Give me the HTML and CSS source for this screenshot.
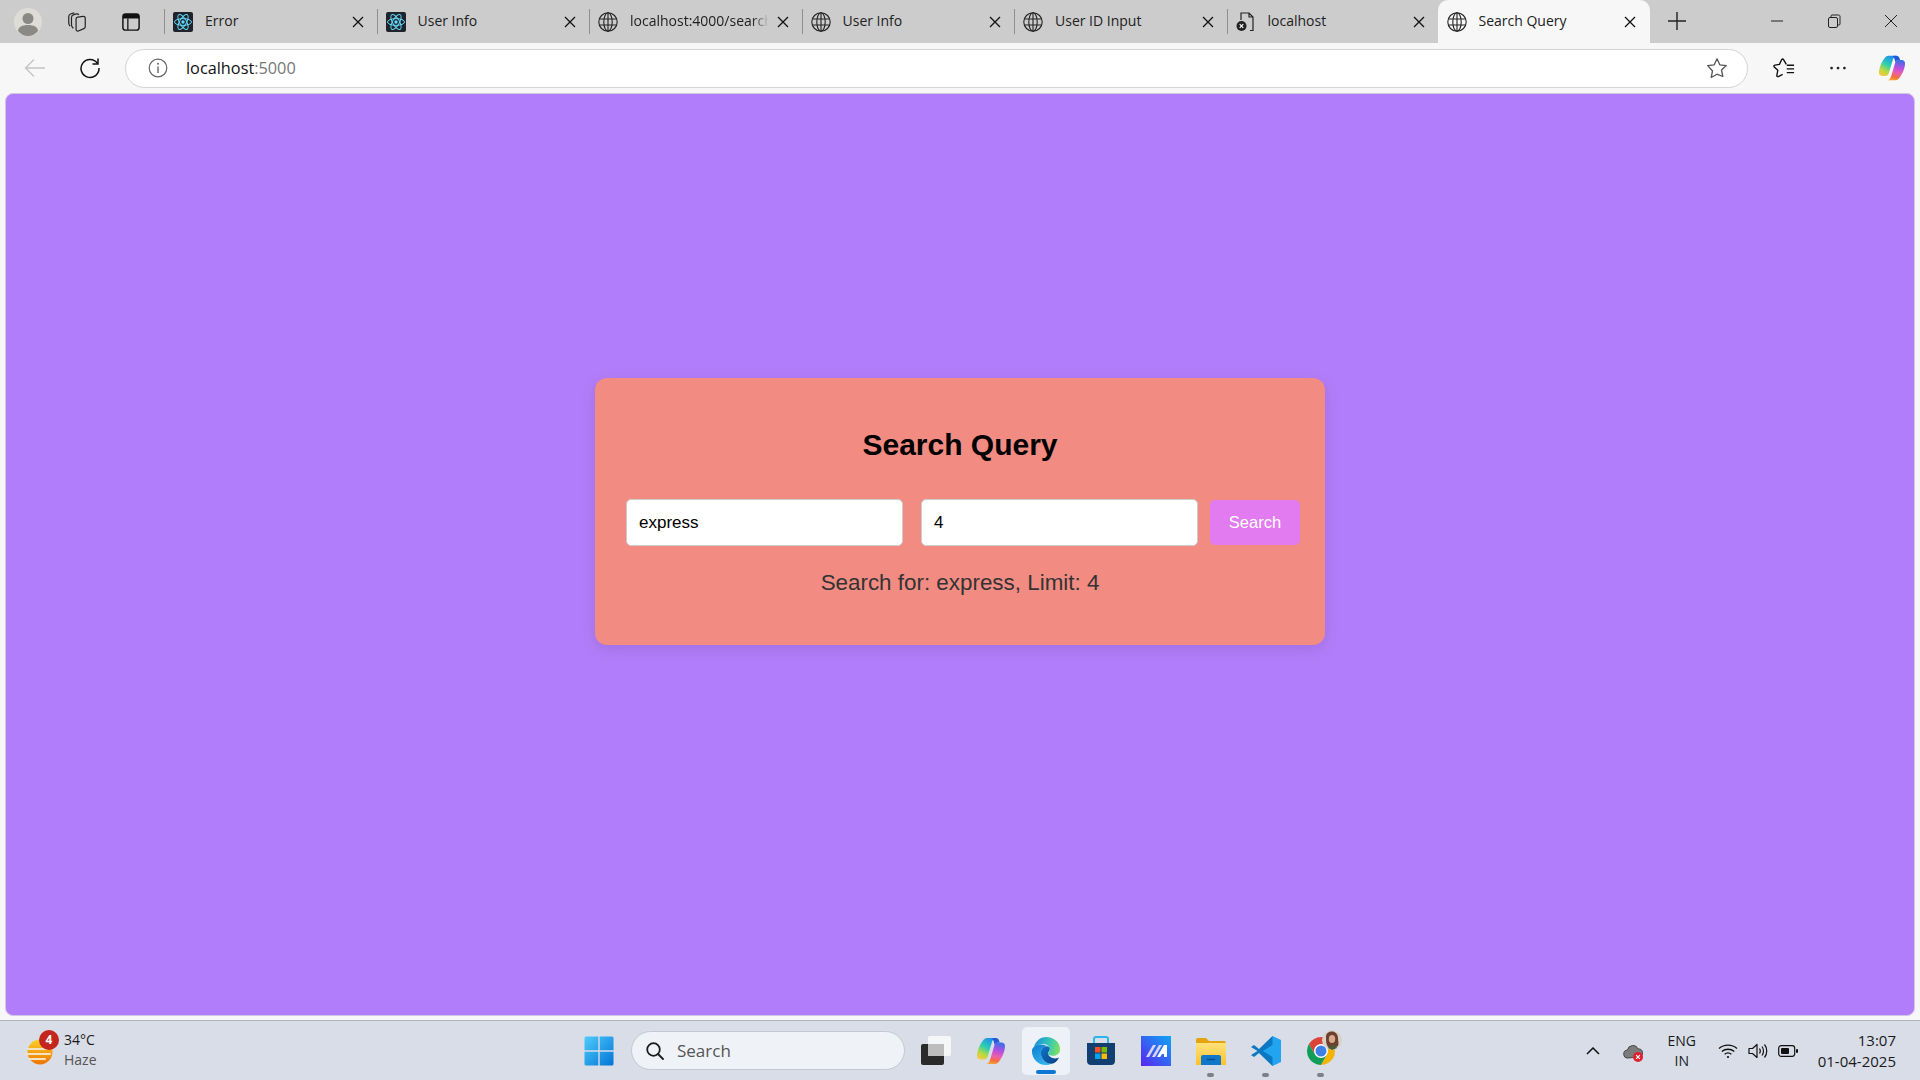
FILE: index.html
```html
<!DOCTYPE html>
<html lang="en">
<head>
    <meta charset="UTF-8">
    <title>Search Query</title>
    <link rel="stylesheet" href="styles.css">
</head>
<body>
<svg class="defs" width="0" height="0">
    <defs>
        <symbol id="react" viewBox="0 0 20 20">
            <rect width="20" height="20" rx="2" fill="#20232a"/>
            <g fill="none" stroke="#61dafb" stroke-width="1">
                <ellipse cx="10" cy="10" rx="8.5" ry="3.4"/>
                <ellipse cx="10" cy="10" rx="8.5" ry="3.4" transform="rotate(60 10 10)"/>
                <ellipse cx="10" cy="10" rx="8.5" ry="3.4" transform="rotate(120 10 10)"/>
            </g>
            <circle cx="10" cy="10" r="1.7" fill="#61dafb"/>
        </symbol>
        <symbol id="globe" viewBox="0 0 20 20">
            <g fill="none" stroke="#222" stroke-width="1.1">
                <circle cx="10" cy="10" r="9.2"/>
                <ellipse cx="10" cy="10" rx="4.2" ry="9.2"/>
                <path d="M1.5 7h17M1.5 13h17M10 .8v18.4"/>
            </g>
        </symbol>
        <symbol id="fileerr" viewBox="0 0 20 20">
            <path d="M7 1h6l4 4v13.5h-3M5 8V1h3M13 1v4h4" fill="none" stroke="#222" stroke-width="1.2"/>
            <circle cx="5.5" cy="14" r="5" fill="#222"/>
            <path d="M3.7 12.2l3.6 3.6M7.3 12.2l-3.6 3.6" stroke="#fff" stroke-width="1.2"/>
        </symbol>
        <symbol id="close" viewBox="0 0 12 12">
            <path d="M1 1l10 10M11 1L1 11" fill="none" stroke="#111" stroke-width="1.3"/>
        </symbol>
        <linearGradient id="copA" x1=".7" y1="0" x2=".2" y2="1">
            <stop offset="0" stop-color="#1f8cf0"/>
            <stop offset=".45" stop-color="#2fd0b0"/>
            <stop offset=".75" stop-color="#b8d940"/>
            <stop offset="1" stop-color="#f7c93e"/>
        </linearGradient>
        <linearGradient id="copB" x1=".6" y1="0" x2=".4" y2="1">
            <stop offset="0" stop-color="#3a6fe8"/>
            <stop offset=".35" stop-color="#b34fe0"/>
            <stop offset=".65" stop-color="#ee5fa8"/>
            <stop offset=".85" stop-color="#f2703a"/>
            <stop offset="1" stop-color="#f5a030"/>
        </linearGradient>
        <symbol id="copilot" viewBox="0 0 30 30">
            <path d="M11 2H20C18 2 17 3.500 16 6L11.500 21C11 22.500 9.500 23.500 8 23.500H4.500C2.500 23.500 1 22 1 20C1 15 4 8 7 4.500C8 3 9.500 2 11 2Z" fill="url(#copA)"/>
            <path d="M19 28H10C12 28 13 26.500 14 24L18.500 9C19 7.500 20.500 6.500 22 6.500H25.500C27.500 6.500 29 8 29 10C29 15 26 22 23 25.500C22 27 20.500 28 19 28Z" fill="url(#copB)"/>
            <path d="M17 2h3c1.500 0 2.500 1 3 2.500l.7 2H22c-1.500 0-3 1-3.500 2.500C18 6 17.500 3.500 16 3z" fill="#2458d8"/>
        </symbol>
        <linearGradient id="edgeA" x1="0" y1=".4" x2="1" y2=".6">
            <stop offset="0" stop-color="#1b8fdc"/>
            <stop offset=".55" stop-color="#36c8b4"/>
            <stop offset="1" stop-color="#7ee25f"/>
        </linearGradient>
        <linearGradient id="edgeB" x1="0" y1="0" x2="1" y2="1">
            <stop offset="0" stop-color="#0c76c9"/>
            <stop offset="1" stop-color="#0a3f86"/>
        </linearGradient>
        <linearGradient id="edgeC" x1="0" y1="0" x2=".6" y2="1">
            <stop offset="0" stop-color="#0f7bd0"/>
            <stop offset="1" stop-color="#2fb4ec"/>
        </linearGradient>
        <linearGradient id="folder" x1="0" y1="0" x2="0" y2="1">
            <stop offset="0" stop-color="#ffe27a"/>
            <stop offset="1" stop-color="#fcc02e"/>
        </linearGradient>
        <linearGradient id="appa" x1="0" y1="1" x2="1" y2="0">
            <stop offset="0" stop-color="#5a24f0"/>
            <stop offset="1" stop-color="#0ea5f5"/>
        </linearGradient>
        <linearGradient id="win" x1="0" y1="0" x2="1" y2="1">
            <stop offset="0" stop-color="#4fcbfb"/>
            <stop offset="1" stop-color="#0274d6"/>
        </linearGradient>
        <linearGradient id="sun" x1="0" y1="0" x2="0" y2="1">
            <stop offset="0" stop-color="#fcd025"/>
            <stop offset="1" stop-color="#ee7404"/>
        </linearGradient>
    </defs>
</svg>

<header class="tabstrip">
    <div class="strip-left">
        <svg class="avatar" viewBox="0 0 28 28">
            <circle cx="14" cy="14" r="14" fill="#dddcd7"/>
            <circle cx="14" cy="10.500" r="5.500" fill="#8b8985"/>
            <path d="M4 23c0-4 4.500-6 10-6s10 2 10 6c-2.500 3-6 5-10 5s-7.500-2-10-5z" fill="#8b8985"/>
        </svg>
        <svg class="strip-icon" viewBox="0 0 22 24" fill="none" stroke="#222" stroke-width="1.300">
            <path d="M10 8.500c0-1 .7-1.800 1.700-1.900l6-.8c1.200-.1 2.300.8 2.300 2v9.500c0 1-.7 1.800-1.500 2l-6 2.500c-1.200.5-2.500-.4-2.500-1.700z"/>
            <path d="M7 19l-1.500-2C5 16 5 15 5 14V7c0-1.500 1-2.500 2.500-3l3-.8c1-.2 2 .3 2.500 1"/>
            <path d="M3.500 16.500l-1-1.500C2 14 2 13.500 2 12.500V6c0-1.500 1-2.500 2.500-3L8 2"/>
        </svg>
        <svg class="strip-icon" viewBox="0 0 20 20">
            <rect x="1" y="1" width="18" height="18" rx="3" fill="none" stroke="#111" stroke-width="1.600"/>
            <path d="M1 3.500a2.500 2.500 0 012.500-2.500h13A2.500 2.500 0 0119 3.500V6H1z" fill="#111"/>
            <path d="M6.500 6v13" stroke="#111" stroke-width="1.400"/>
        </svg>
    </div>
    <div class="tab">
        <svg class="fav"><use href="#react"/></svg>
        <span class="tab-title">Error</span>
        <svg class="tab-close"><use href="#close"/></svg>
    </div>
    <div class="tab">
        <svg class="fav"><use href="#react"/></svg>
        <span class="tab-title">User Info</span>
        <svg class="tab-close"><use href="#close"/></svg>
    </div>
    <div class="tab">
        <svg class="fav"><use href="#globe"/></svg>
        <span class="tab-title tab-fade">localhost:4000/search</span>
        <svg class="tab-close"><use href="#close"/></svg>
    </div>
    <div class="tab">
        <svg class="fav"><use href="#globe"/></svg>
        <span class="tab-title">User Info</span>
        <svg class="tab-close"><use href="#close"/></svg>
    </div>
    <div class="tab">
        <svg class="fav"><use href="#globe"/></svg>
        <span class="tab-title">User ID Input</span>
        <svg class="tab-close"><use href="#close"/></svg>
    </div>
    <div class="tab tab-short">
        <svg class="fav"><use href="#fileerr"/></svg>
        <span class="tab-title">localhost</span>
        <svg class="tab-close"><use href="#close"/></svg>
    </div>
    <div class="tab active">
        <svg class="fav"><use href="#globe"/></svg>
        <span class="tab-title">Search Query</span>
        <svg class="tab-close"><use href="#close"/></svg>
    </div>
    <svg class="newtab" viewBox="0 0 18 18"><path d="M9 0v18M0 9h18" stroke="#222" stroke-width="1.400"/></svg>
    <div class="winctl">
        <svg viewBox="0 0 14 14"><path d="M1 7h12" stroke="#222" stroke-width="1"/></svg>
        <svg viewBox="0 0 14 14" fill="none" stroke="#222" stroke-width="1"><rect x="1.500" y="3.500" width="9" height="10" rx="1.500"/><path d="M4 3.500V2c0-.6.5-1 1-1h6.500c1 0 1.500.5 1.500 1.500V10c0 .6-.4 1-1 1h-1"/></svg>
        <svg viewBox="0 0 14 14"><path d="M1 1l12 12M13 1L1 13" stroke="#222" stroke-width="1"/></svg>
    </div>
</header>

<nav class="toolbar">
    <svg class="tool back" viewBox="0 0 22 20"><path d="M21 10H2M10 1.500L1.500 10l8.500 8.500" fill="none" stroke="#c4c4c4" stroke-width="1.300"/></svg>
    <svg class="tool reload" viewBox="0 0 22 22" fill="none" stroke="#111" stroke-width="1.500"><path d="M18.500 6.500A9 9 0 1020 11"/><path d="M19 1.500v5.500h-5.500"/></svg>
    <div class="address">
        <svg class="info" viewBox="0 0 20 20"><circle cx="10" cy="10" r="8.800" fill="none" stroke="#666" stroke-width="1.200"/><path d="M10 8.500V15" stroke="#666" stroke-width="1.400"/><circle cx="10" cy="5.800" r="1" fill="#666"/></svg>
        <span class="url">localhost<span class="url-port">:5000</span></span>
        <svg class="star" viewBox="0 0 22 22"><path d="M11 1.800l2.800 6 6.500.8-4.800 4.400 1.300 6.500L11 17.200 5.200 20.500l1.300-6.500L1.700 8.600l6.500-.8z" fill="none" stroke="#555" stroke-width="1.300" stroke-linejoin="round"/></svg>
    </div>
    <div class="tool-right">
        <svg class="tool" viewBox="0 0 24 24" fill="none" stroke="#111" stroke-width="1.500"><path d="M14.500 8L11.500 2.800C11 2 10 2 9.500 2.800L7 8l-5 .8c-1 .2-1.300 1.300-.6 2l3.800 3.700-1 5.500c-.2 1 .8 1.700 1.700 1.300L10.500 19" stroke-linejoin="round"/><path d="M15 9h8M15 13h8M15 17h8"/></svg>
        <svg class="tool" viewBox="0 0 24 24"><circle cx="5" cy="12" r="1.500" fill="#222"/><circle cx="12" cy="12" r="1.500" fill="#222"/><circle cx="19" cy="12" r="1.500" fill="#222"/></svg>
        <svg class="tool copilot-top"><use href="#copilot"/></svg>
    </div>
</nav>

<main class="page">
    <section class="card">
        <h1 class="card-title">Search Query</h1>
        <form class="search-form">
            <input class="field" type="text" value="express">
            <input class="field" type="text" value="4">
            <button class="search-btn" type="button">Search</button>
        </form>
        <p class="result">Search for: express, Limit: 4</p>
    </section>
</main>

<footer class="taskbar">
    <div class="weather">
        <svg class="weather-icon" viewBox="0 0 28 26">
            <circle cx="15" cy="13" r="12.500" fill="url(#sun)"/>
            <path d="M3 10h18M1 15h24M4 20h16" stroke="#f3e3c0" stroke-width="2.200" stroke-linecap="round"/>
        </svg>
        <span class="badge">4</span>
        <div class="weather-text">
            <span class="temp">34°C</span>
            <span class="haze">Haze</span>
        </div>
    </div>
    <div class="task-center">
        <span class="slot">
            <svg class="task-icon" viewBox="0 0 30 30">
                <path d="M.5 2a1.500 1.500 0 011.500-1.500h12.300v13.800H.5zM15.700.5H28A1.500 1.500 0 0129.500 2v12.300H15.700zM.5 15.700h13.800v13.800H2A1.500 1.500 0 01.5 28zM15.700 15.700h13.800V28a1.500 1.500 0 01-1.500 1.500H15.700z" fill="url(#win)"/>
            </svg>
        </span>
        <div class="task-search">
            <svg class="search-glass" viewBox="0 0 18 18" fill="none" stroke="#1c1c1c" stroke-width="1.800"><circle cx="7.500" cy="7.500" r="6.300"/><path d="M12 12l5 5" stroke-linecap="round"/></svg>
            <span>Search</span>
        </div>
        <span class="slot">
            <svg class="task-icon" viewBox="0 0 30 30">
                <rect y="8" width="23" height="21" rx="2" fill="#2a2a2a"/>
                <rect x="7" y="0" width="23" height="20" rx="2" fill="#fafafa" opacity=".85"/>
                <rect x="7" y="8" width="16" height="12" fill="#bdbdbd"/>
            </svg>
        </span>
        <span class="slot"><svg class="task-icon"><use href="#copilot"/></svg></span>
        <span class="slot">
            <span class="edge-box">
                <svg class="task-icon" viewBox="0 0 32 32">
                    <path d="M3 12C5 5 10 1 16 1C25 1 31 7 31 14C31 19 27 21 23 21C20 21 18 20 18 19C18 18 20 17.500 20 14.500C20 10.500 16 8.500 13 8.500C9 8.500 5 10 3 12Z" fill="url(#edgeA)"/>
                    <path d="M1 16C1 11.500 6 9 11 9C14 9 16 10 17 11C13 11 10.500 14 10.500 18C10.500 24 16 30 22 29.500C20 30.500 18 31 16 31C7 31 1 24 1 16Z" fill="url(#edgeC)"/>
                    <path d="M10.500 18C10.500 14 13 11 17 11C19 11 20 12.500 20 14C20 16 18 17 18 18.500C18 21 22 24 26 24C27.500 24 29 23.500 30 23C28 27 25 29.500 22 29.500C16 30 10.500 24 10.500 18Z" fill="url(#edgeB)"/>
                </svg>
                <i class="running-wide"></i>
            </span>
        </span>
        <span class="slot">
            <svg class="task-icon" viewBox="0 0 30 30">
                <path d="M8 7V3c0-1 .5-2 2-2h10c1.500 0 2 1 2 2v4" fill="none" stroke="#2cb6ea" stroke-width="2"/>
                <path d="M1 7h28v18c0 2.500-1.500 4-4 4H5c-2.500 0-4-1.500-4-4z" fill="#123f72"/>
                <rect x="9" y="11" width="5.500" height="5.500" fill="#f25022"/>
                <rect x="15.500" y="11" width="5.500" height="5.500" fill="#7fba00"/>
                <rect x="9" y="17.500" width="5.500" height="5.500" fill="#00a4ef"/>
                <rect x="15.500" y="17.500" width="5.500" height="5.500" fill="#ffb900"/>
            </svg>
        </span>
        <span class="slot">
            <svg class="task-icon" viewBox="0 0 30 30">
                <rect width="30" height="30" fill="url(#appa)"/>
                <path d="M5 21l7-12h3L8 21zM11 21l7-12h3L14 21z" fill="#d9d6f7"/>
                <path d="M16 21l7-12h3v12h-3v-3h-2l-1.800 3z" fill="#fff"/>
            </svg>
        </span>
        <span class="slot">
            <svg class="task-icon" viewBox="0 0 30 30">
                <path d="M0 4c0-1 .5-2 2-2h8l3 3h15c1 0 2 1 2 2v3H0z" fill="#e3a40e"/>
                <rect y="7" width="30" height="22" fill="url(#folder)"/>
                <path d="M5 21c0-1 .5-2 2-2h16c1.500 0 2 1 2 2v8H5z" fill="#0f78c8"/>
                <path d="M11 23.500h8" stroke="#0a4d8c" stroke-width="1.500"/>
            </svg>
            <i class="running"></i>
        </span>
        <span class="slot">
            <svg class="task-icon" viewBox="0 0 30 30">
                <path d="M21.500 0L30 4v22l-8.500 4L8 16.500z" fill="#23a4f0"/>
                <path d="M21.500 0L8 13 3 9 0 11l6.500 4L0 19l3 2 5-4 13.500 13V21L12 15l9.500-6z" fill="#0a78c2"/>
            </svg>
            <i class="running"></i>
        </span>
        <span class="slot">
            <svg class="task-icon" viewBox="0 0 30 30">
                <circle cx="15" cy="15" r="7" fill="#fff"/>
                <path d="M2.880 8A14 14 0 0127.120 8H15A7 7 0 008.940 18.500z" fill="#db4437"/>
                <path d="M2.880 8L8.940 18.500A7 7 0 0021.060 18.500L15 29A14 14 0 012.880 8z" fill="#0f9d58"/>
                <path d="M27.120 8A14 14 0 0115 29L21.060 18.500A7 7 0 0015 8z" fill="#f4b400"/>
                <circle cx="15" cy="15" r="5.500" fill="#3f7fe8"/>
            </svg>
            <svg class="chrome-avatar" viewBox="0 0 20 20">
                <circle cx="10" cy="10" r="10" fill="#d9d2c8"/>
                <path d="M4 7c0-4 3-5.500 6-5.500S16 4 16 8c0 3 1 5 0 8l-4 2-6-1c-2-3-2-6-2-10z" fill="#6b4030"/>
                <ellipse cx="10" cy="9" rx="3.200" ry="4" fill="#d9a98c"/>
                <path d="M6 18c1-3 6-4 8-2l1 2-5 2z" fill="#4a5a38"/>
            </svg>
            <i class="running"></i>
        </span>
    </div>
    <div class="tray">
        <svg class="tray-chevron" viewBox="0 0 14 8"><path d="M1 7l6-6 6 6" fill="none" stroke="#111" stroke-width="1.500"/></svg>
        <svg class="tray-cloud" viewBox="0 0 20 18">
            <path d="M5 14a4 4 0 01-.5-8A5.500 5.500 0 0115 5a4 4 0 011 8z" fill="#7c7c7c" stroke="#444" stroke-width="1"/>
            <circle cx="15" cy="13" r="5" fill="#e0202e"/>
            <path d="M13.200 11.200l3.600 3.600M16.800 11.200l-3.600 3.600" stroke="#fff" stroke-width="1.200"/>
        </svg>
        <div class="lang"><span>ENG</span><span>IN</span></div>
        <svg class="tray-icon wifi" viewBox="0 0 20 16" fill="none" stroke="#111" stroke-width="1.300"><path d="M1 5.500c5-4.500 13-4.500 18 0M3.800 8.500c3.500-3 9-3 12.500 0M6.600 11.300c2-1.600 4.800-1.600 6.800 0"/><circle cx="10" cy="14" r="1.100" fill="#111" stroke="none"/></svg>
        <svg class="tray-icon" viewBox="0 0 20 16" fill="none" stroke="#111" stroke-width="1.200"><path d="M1 5.500h3.500L9 1.500v13l-4.500-4H1z" stroke-linejoin="round"/><path d="M11.500 5.500c1 1.500 1 3.500 0 5M14 3.500c2 2.500 2 6.500 0 9M16.500 1.500c3 3.500 3 9.500 0 13"/></svg>
        <svg class="tray-icon" viewBox="0 0 20 14"><rect x=".7" y="1.700" width="16" height="10.600" rx="2.500" fill="none" stroke="#111" stroke-width="1.200"/><rect x="3" y="4" width="8" height="6" rx="1" fill="#111"/><rect x="18" y="5" width="2" height="4" rx="1" fill="#111"/></svg>
        <div class="clock"><span>13:07</span><span>01-04-2025</span></div>
    </div>
</footer>
</body>
</html>
```

FILE: styles.css
```css
*{
    margin:0;
    padding:0;
    box-sizing:border-box;
}
html,body{
    width:1920px;
    height:1080px;
    overflow:hidden;
}
body{
    display:flex;
    flex-direction:column;
    background:#f7f7f7;
    font-family:"Open Sans","Noto Sans",sans-serif;
    color:#1a1a1a;
}
svg{
    display:block;
    flex:none;
}
.defs{
    position:absolute;
}

/* tab strip */
.tabstrip{
    height:43px;
    flex:none;
    display:flex;
    background:#cccccc;
}
.strip-left{
    width:164px;
    flex:none;
    display:flex;
    align-items:center;
    padding-left:14px;
}
.avatar{
    width:28px;
    height:28px;
}
.strip-icon{
    width:22px;
    height:22px;
}
.strip-left .strip-icon:nth-child(2){
    margin-left:24px;
}
.strip-left .strip-icon:nth-child(3){
    margin-left:34px;
    width:18px;
    height:18px;
}
.tab{
    width:212.500px;
    flex:none;
    display:flex;
    align-items:center;
    padding:0 13px 0 9px;
    position:relative;
    font-size:14px;
}
.tab::before{
    content:"";
    position:absolute;
    left:0;
    top:9px;
    height:25px;
    width:1px;
    background:#8f8f8f;
}
.tab-short{
    width:211px;
}
.fav{
    width:20px;
    height:20px;
}
.tab-title{
    margin-left:12px;
    flex:1;
    white-space:nowrap;
    overflow:hidden;
    color:#222;
    line-height:20px;
    margin-top:-2px;
}
.tab-fade{
    -webkit-mask-image:linear-gradient(to right,#000 88%,transparent);
    mask-image:linear-gradient(to right,#000 88%,transparent);
}
.tab-close{
    width:12px;
    height:12px;
    margin-left:8px;
}
.tab.active{
    padding-right:14px;
    background:#f7f7f7;
    border-radius:10px 10px 0 0;
}
.tab.active::before{
    display:none;
}
.newtab{
    width:18px;
    height:18px;
    margin:12px 0 0 18px;
}
.winctl{
    display:flex;
    margin-left:auto;
    padding:14px 22px 0 0;
    gap:43px;
}
.winctl svg{
    width:14px;
    height:14px;
}

/* toolbar */
.toolbar{
    height:50px;
    flex:none;
    display:flex;
    align-items:center;
    padding:0 14px 0 24px;
    background:#f7f7f7;
}
.tool{
    width:22px;
    height:22px;
}
.reload{
    margin-left:33px;
}
.address{
    width:1626px;
    height:39px;
    margin-left:24px;
    display:flex;
    align-items:center;
    padding:0 19px 0 22px;
    background:#fff;
    border:1px solid #d4d4d4;
    border-radius:20px;
}
.info{
    width:20px;
    height:20px;
}
.url{
    margin-left:18px;
    font-size:16.300px;
    color:#111;
}
.url-port{
    color:#777;
}
.star{
    width:22px;
    height:22px;
    margin-left:auto;
}
.tool-right{
    display:flex;
    align-items:center;
    margin-left:25px;
    gap:32px;
}
.copilot-top{
    width:28px;
    height:28px;
    margin-left:-3px;
}

/* page */
.page{
    flex:none;
    height:923px;
    margin:0 5px;
    padding-top:284px;
    display:flex;
    flex-direction:column;
    align-items:center;
    background:#b27dfa;
    border-radius:8px;
    border:1px solid #d2c6e6;
    font-family:"Liberation Sans",Arial,sans-serif;
}
.card{
    width:730px;
    height:267px;
    padding-top:47px;
    background:#f28b82;
    border-radius:12px;
    box-shadow:0 4px 15px rgba(0,0,0,.1);
    text-align:center;
}
.card-title{
    font-size:30px;
    line-height:40px;
    font-weight:bold;
    color:#000;
}
.search-form{
    display:flex;
    align-items:center;
    margin-top:34px;
    padding-left:31px;
}
.field{
    width:277px;
    height:47px;
    margin-right:18px;
    padding:0 12px;
    border:1px solid #ccc;
    border-radius:5px;
    background:#fff;
    font-family:"Liberation Sans",Arial,sans-serif;
    font-size:17px;
    color:#000;
}
.field + .field{
    margin-right:12px;
}
.search-btn{
    width:90px;
    height:45px;
    border:none;
    border-radius:5px;
    background:#e27bef;
    color:#fff;
    font-family:"Liberation Sans",Arial,sans-serif;
    font-size:16.500px;
}
.result{
    margin-top:22px;
    font-size:22.400px;
    line-height:30px;
    color:#333;
}

/* taskbar */
.taskbar{
    margin-top:4px;
    flex:1;
    display:flex;
    align-items:center;
    background:#d8dde8;
    border-top:1px solid #b2b5bc;
    position:relative;
}
.weather{
    width:571px;
    flex:none;
    display:flex;
    align-items:center;
    padding-left:25px;
    position:relative;
}
.weather-icon{
    width:28px;
    height:26px;
    margin-top:2px;
}
.badge{
    position:absolute;
    left:39px;
    top:-2px;
    width:20px;
    height:20px;
    border-radius:50%;
    background:#c4251c;
    color:#fff;
    font-size:12px;
    font-weight:bold;
    line-height:20px;
    text-align:center;
}
.weather-text{
    display:flex;
    flex-direction:column;
    margin-left:11px;
    margin-top:-2px;
    font-size:14px;
    line-height:20px;
}
.temp{
    color:#1a1a1a;
}
.haze{
    color:#555;
}
.task-center{
    display:flex;
    align-items:center;
}
.slot{
    width:55px;
    height:48px;
    display:flex;
    flex-direction:column;
    align-items:center;
    justify-content:center;
    position:relative;
}
.task-icon{
    width:30px;
    height:30px;
}
.task-search{
    width:274px;
    height:39px;
    margin:0 3px 0 5px;
    display:flex;
    align-items:center;
    padding-left:14px;
    background:#eff2f7;
    border:1px solid #c3c8d2;
    border-radius:20px;
    font-size:17px;
    color:#555;
}
.search-glass{
    width:18px;
    height:18px;
    margin-right:13px;
}
.edge-box{
    width:48px;
    height:48px;
    display:flex;
    align-items:center;
    justify-content:center;
    background:#eef1f7;
    border-radius:5px;
    position:relative;
}
.running-wide{
    position:absolute;
    left:14px;
    bottom:1px;
    width:20px;
    height:4px;
    border-radius:2px;
    background:#0a78d4;
}
.running{
    position:absolute;
    left:24px;
    bottom:-2px;
    width:7px;
    height:4px;
    border-radius:2px;
    background:#7d8088;
}
.chrome-avatar{
    position:absolute;
    left:29px;
    top:3px;
    width:20px;
    height:20px;
}
.tray{
    margin-left:auto;
    display:flex;
    align-items:center;
    padding-right:24px;
    font-size:14px;
    color:#1a1a1a;
}
.tray-chevron{
    width:14px;
    height:8px;
}
.tray-cloud{
    width:20px;
    height:18px;
    margin-left:23px;
    margin-top:4px;
}
.lang{
    width:40px;
    margin-left:19px;
    display:flex;
    flex-direction:column;
    align-items:center;
    line-height:20px;
}
.tray-icon{
    width:20px;
    height:16px;
    margin-left:10px;
}
.wifi{
    margin-left:16px;
}
.clock{
    margin-left:20px;
    display:flex;
    flex-direction:column;
    align-items:flex-end;
    font-size:15px;
    line-height:21px;
}
```
